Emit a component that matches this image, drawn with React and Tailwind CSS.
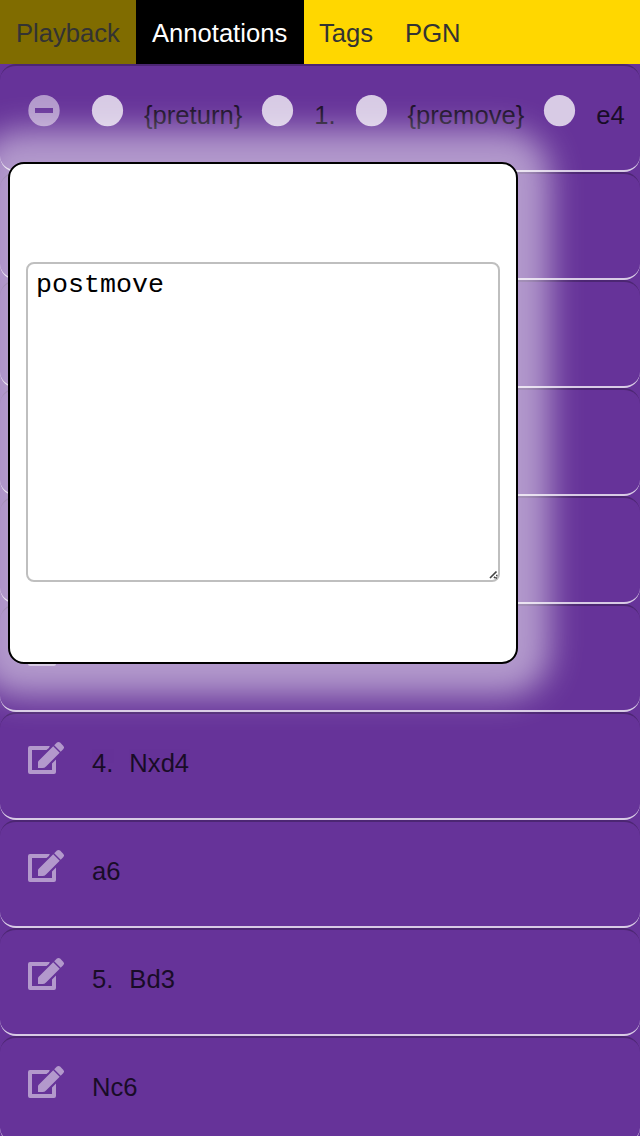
const Row = ({ children }) => (
  <div className="flex h-[108px] w-full shrink-0 items-start overflow-hidden rounded-2xl border-t-2 border-b-2 border-t-black/25 border-b-white/75 pl-7">
    {children}
  </div>
);

const EditIcon = () => (
  <svg className="mt-[26px] mr-6 h-10 w-10 shrink-0 text-white/50" viewBox="0 0 40 40" fill="currentColor">
    <path d="M2 6H21.8Q21.500 8.500 18.500 10H4V30H24V23.500L28 19.500V32a2 2 0 0 1-2 2H2a2 2 0 0 1-2-2V8a2 2 0 0 1 2-2Z" />
    <path d="M10 28V22.500Q10 21.500 10.700 20.800L25.200 6.300L31.700 12.800L18 26.500Q16.500 28 14.500 28Z" />
    <path d="M26.200 5.300L28.900 2.600Q30.500 1.200 32.100 2.600L35.400 5.900Q36.800 7.500 35.400 9.100L32.700 11.800Z" />
  </svg>
);

const MinusIcon = () => (
  <svg className="mt-[29px] mr-8 h-8 w-8 shrink-0 overflow-visible text-white/50" viewBox="0 0 32 32" fill="currentColor">
    <path fillRule="evenodd" d="M16 -.1a15.700 15.700 0 1 0 0 31.400a15.700 15.700 0 0 0 0-31.400ZM7 13H25V18H7Z" />
  </svg>
);

const Dot = () => (
  <svg className="mt-[29px] mr-5 h-8 w-8 shrink-0 overflow-visible text-white/75" viewBox="0 0 32 32" fill="currentColor">
    <circle cx="15.500" cy="15.600" r="15.600" />
  </svg>
);

const Label = ({ children }) => (
  <span className="mt-[33px] mr-5 shrink-0 whitespace-nowrap opacity-75">{children}</span>
);

const moves = [
  ["", "e5"],
  ["2.", "Nf3"],
  ["", "Nc6"],
  ["3.", "d4"],
  ["", "exd4"],
  ["4.", "Nxd4"],
  ["", "a6"],
  ["5.", "Bd3"],
  ["", "Nc6"],
];

export default function App() {
  return (
    <div className="relative flex h-[1136px] w-[640px] flex-col overflow-hidden bg-[#663399] font-['Liberation_Sans',Arial,sans-serif] text-[25.600px] leading-8 text-black">
      <nav className="flex h-16 shrink-0 bg-[#ffd700] text-[#333]">
        <span className="w-[136px] bg-[#806c00] px-4 pt-[17px]">Playback</span>
        <span className="w-[168px] bg-black px-4 pt-[17px] text-white">Annotations</span>
        <span className="pr-4 pl-[15px] pt-[17px]">Tags</span>
        <span className="px-4 pt-[17px]">PGN</span>
      </nav>
      <main className="flex flex-col">
        <Row>
          <MinusIcon />
          <Dot />
          <Label>{"{preturn}"}</Label>
          <Dot />
          <Label>1.</Label>
          <Dot />
          <Label>{"{premove}"}</Label>
          <Dot />
          <Label>e4</Label>
        </Row>
        {moves.map(([number, move], i) => (
          <Row key={i}>
            <EditIcon />
            {number && <span className="mt-[33px] mr-4 opacity-75">{number}</span>}
            <span className="mt-[33px] opacity-75">{move}</span>
          </Row>
        ))}
      </main>
      <div
        role="dialog"
        className="absolute top-[162px] left-2 flex h-[502px] w-[510px] items-start rounded-2xl border-2 border-black bg-white px-4 pt-[98px] shadow-[0_0_32px_32px_rgba(255,255,255,0.5)]"
      >
        <div className="relative h-80 w-full">
          <textarea
            className="block h-80 w-full resize-none rounded-lg border-2 border-[#bfbfbf] bg-white px-2 py-[5px] font-['Liberation_Mono',monospace] text-[26.667px] leading-8 outline-none"
            defaultValue="postmove"
            spellCheck={false}
          />
          <svg
            className="pointer-events-none absolute right-[2px] bottom-[3px] h-2 w-2 overflow-visible"
            viewBox="0 0 8 8"
            fill="none"
            stroke="#444"
            strokeWidth="1.700"
          >
            <path d="M0 7L6.500 .5M4 7L5.200 5.800M6 4.500H7.500M5.500 7H7" />
          </svg>
        </div>
      </div>
    </div>
  );
}
